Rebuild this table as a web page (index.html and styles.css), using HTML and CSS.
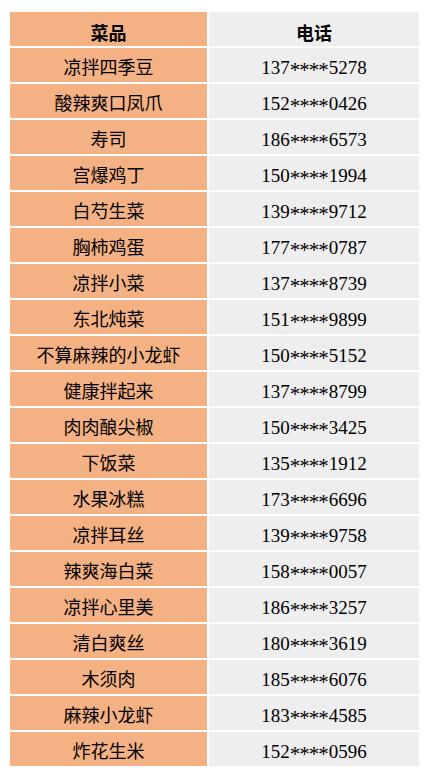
FILE: index.html
```html
<!DOCTYPE html>
<html lang="zh">
<head>
<meta charset="utf-8">
<link rel="stylesheet" href="styles.css">
</head>
<body>
<table class="menu">
<colgroup><col class="c-dish"><col class="c-phone"></colgroup>
<thead>
<tr><th class="dish">菜品</th><th class="phone">电话</th></tr>
</thead>
<tbody>
<tr><td class="dish">凉拌四季豆</td><td class="phone">137<span class="mask">****</span>5278</td></tr>
<tr><td class="dish">酸辣爽口凤爪</td><td class="phone">152<span class="mask">****</span>0426</td></tr>
<tr><td class="dish">寿司</td><td class="phone">186<span class="mask">****</span>6573</td></tr>
<tr><td class="dish">宫爆鸡丁</td><td class="phone">150<span class="mask">****</span>1994</td></tr>
<tr><td class="dish">白芍生菜</td><td class="phone">139<span class="mask">****</span>9712</td></tr>
<tr><td class="dish">胸柿鸡蛋</td><td class="phone">177<span class="mask">****</span>0787</td></tr>
<tr><td class="dish">凉拌小菜</td><td class="phone">137<span class="mask">****</span>8739</td></tr>
<tr><td class="dish">东北炖菜</td><td class="phone">151<span class="mask">****</span>9899</td></tr>
<tr><td class="dish">不算麻辣的小龙虾</td><td class="phone">150<span class="mask">****</span>5152</td></tr>
<tr><td class="dish">健康拌起来</td><td class="phone">137<span class="mask">****</span>8799</td></tr>
<tr><td class="dish">肉肉酿尖椒</td><td class="phone">150<span class="mask">****</span>3425</td></tr>
<tr><td class="dish">下饭菜</td><td class="phone">135<span class="mask">****</span>1912</td></tr>
<tr><td class="dish">水果冰糕</td><td class="phone">173<span class="mask">****</span>6696</td></tr>
<tr><td class="dish">凉拌耳丝</td><td class="phone">139<span class="mask">****</span>9758</td></tr>
<tr><td class="dish">辣爽海白菜</td><td class="phone">158<span class="mask">****</span>0057</td></tr>
<tr><td class="dish">凉拌心里美</td><td class="phone">186<span class="mask">****</span>3257</td></tr>
<tr><td class="dish">清白爽丝</td><td class="phone">180<span class="mask">****</span>3619</td></tr>
<tr><td class="dish">木须肉</td><td class="phone">185<span class="mask">****</span>6076</td></tr>
<tr><td class="dish">麻辣小龙虾</td><td class="phone">183<span class="mask">****</span>4585</td></tr>
<tr><td class="dish">炸花生米</td><td class="phone">152<span class="mask">****</span>0596</td></tr>
</tbody>
</table>
</body>
</html>
```
FILE: styles.css
```css
html, body {
  background: #ffffff;
}
body {
  margin: 10px 8px;
  font-family: "Liberation Serif", "Noto Sans CJK SC", serif;
  color: #000000;
}
.menu {
  border-collapse: separate;
  border-spacing: 2px;
  table-layout: fixed;
  width: 411px;
}
.c-dish { width: 197px; }
.c-phone { width: 210px; }
.menu th,
.menu td {
  height: 34px;
  padding: 0;
  text-align: center;
  vertical-align: middle;
  line-height: 1;
  box-sizing: border-box;
}
.menu th {
  font-family: "Noto Sans CJK SC", sans-serif;
  font-size: 18px;
  font-weight: bold;
  padding-top: 5px;
}
.dish {
  background: #f4b183;
}
.phone {
  background: #eeeeee;
}
td.dish {
  font-family: "Noto Sans CJK SC", sans-serif;
  font-size: 18px;
  padding-top: 1px;
}
td.phone {
  font-size: 19px;
  padding-top: 4px;
}
.mask {
  font-size: 1.1em;
  letter-spacing: -0.95px;
  margin-right: 0.95px;
  vertical-align: -0.18em;
  line-height: 0;
}
```
